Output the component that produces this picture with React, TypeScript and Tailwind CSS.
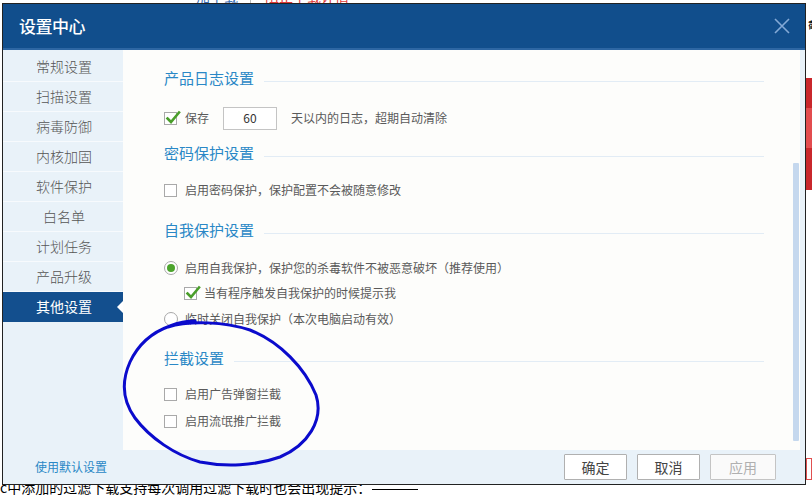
import React from "react";

const font = { fontFamily: '"Microsoft YaHei", "Noto Sans CJK SC", "Noto Sans", sans-serif' };

function Check({ checked }: { checked?: boolean }) {
  return (
    <span className="relative inline-block w-[13px] h-[13px] border border-[#a9a9a9] bg-white shrink-0">
      {checked && (
        <svg className="absolute left-[0px] top-[-3px]" width="16" height="16" viewBox="0 0 16 16">
          <path d="M2.5 8.5 L6 12 L14 2.5" fill="none" stroke="#4a9e2a" strokeWidth="2.6" strokeLinecap="square" />
        </svg>
      )}
    </span>
  );
}

function Radio({ checked }: { checked?: boolean }) {
  return (
    <span className="relative inline-flex items-center justify-center w-[14px] h-[14px] rounded-full border border-[#a9a9a9] bg-white shrink-0">
      {checked && <span className="w-[8px] h-[8px] rounded-full bg-[#4ca42c]" />}
    </span>
  );
}

function Heading({ text }: { text: string }) {
  return (
    <div className="flex items-center h-[24px]">
      <span className="text-[15px] text-[#2a88c6] leading-none">{text}</span>
      <span className="ml-[10px] flex-1 h-px bg-[#e2ecf5] mt-[8px] mr-[36px]" />
    </div>
  );
}

const items = ["常规设置", "扫描设置", "病毒防御", "内核加固", "软件保护", "白名单", "计划任务", "产品升级", "其他设置"];

export default function App() {
  return (
    <div className="relative w-[812px] h-[496px] overflow-hidden bg-white" style={font}>
      {/* page background behind dialog */}
      <div className="absolute left-[196px] top-[-11px] text-[14px] text-[#3b6fb6] leading-none">加下载</div>
      <div className="absolute left-[250px] top-[-9px] w-px h-[12px] bg-[#bbb]" />
      <div className="absolute left-[265px] top-[-11px] text-[14px] text-[#e03a3a] leading-none">阻止下载详情</div>
      <div className="absolute left-[808px] top-[20px] text-[10px] text-black leading-none">截</div>
      <div className="absolute left-[806px] top-[78px] w-[6px] h-[112px] bg-[#c9272c]">
        <div className="mt-[30px] h-[40px] bg-[#e24c4f]" />
      </div>
      <div className="absolute left-[806px] top-[458px] w-[6px] h-[22px] border border-[#e05050] bg-white" />
      <div className="absolute left-0 top-[480px] text-[14px] text-black leading-none whitespace-nowrap">c中添加的过滤下载支持每次调用过滤下载时也会出现提示：</div>
      <div className="absolute left-[372px] top-[489px] w-[46px] h-px bg-black" />

      {/* dialog */}
      <div className="absolute left-[2px] top-[3px] w-[804px] h-[482px] border border-[#222] bg-[#e9f2f9] flex flex-col">
        <div className="h-[44px] bg-[#114e8c] flex items-center justify-between pl-[16px] pr-[14px] shrink-0">
          <span className="text-white text-[17px] font-medium tracking-[-0.5px]">设置中心</span>
          <svg width="18" height="18" viewBox="0 0 18 18">
            <path d="M2 2 L16 16 M16 2 L2 16" stroke="#84a9d6" strokeWidth="1.6" />
          </svg>
        </div>
        <div className="h-[2px] bg-[#2d66a3] shrink-0" />
        <div className="flex h-[400px] shrink-0">
          <div className="w-[120px] flex flex-col pt-[2px]">
            {items.map((t, i) => {
              const sel = i === items.length - 1;
              return (
                <div
                  key={t}
                  className={
                    "relative h-[30px] flex items-center justify-center text-[14px] border-b " +
                    (sel ? "bg-[#134f8e] text-white border-[#134f8e]" : "text-[#555] font-light border-[#f7fafd]")
                  }
                >
                  <span className="ml-[2px]">{t}</span>
                  {sel && (
                    <span className="absolute right-0 top-[9px] w-0 h-0 border-y-[6px] border-y-transparent border-r-[6px] border-r-white" />
                  )}
                </div>
              );
            })}
          </div>
          <div className="relative w-[677px] bg-[#fdfdfb] pl-[41px] pt-[15px] text-[12px] text-[#5a5a5a]">
            <Heading text="产品日志设置" />
            <div className="flex items-center h-[24px] mt-[17px]">
              <Check checked />
              <span className="ml-[8px]">保存</span>
              <span className="ml-[14px] w-[54px] h-[23px] border border-[#c4c4c4] bg-white flex items-center justify-center text-[#333]">60</span>
              <span className="ml-[14px]">天以内的日志，超期自动清除</span>
            </div>
            <div className="mt-[10px]">
              <Heading text="密码保护设置" />
            </div>
            <div className="flex items-center h-[20px] mt-[16px]">
              <Check />
              <span className="ml-[8px]">启用密码保护，保护配置不会被随意修改</span>
            </div>
            <div className="mt-[17px]">
              <Heading text="自我保护设置" />
            </div>
            <div className="flex items-center h-[20px] mt-[17px]">
              <Radio checked />
              <span className="ml-[7px]">启用自我保护，保护您的杀毒软件不被恶意破坏（推荐使用）</span>
            </div>
            <div className="flex items-center h-[20px] mt-[5px] pl-[20px]">
              <Check checked />
              <span className="ml-[7px]">当有程序触发自我保护的时候提示我</span>
            </div>
            <div className="flex items-center h-[20px] mt-[6px]">
              <Radio />
              <span className="ml-[7px]">临时关闭自我保护（本次电脑启动有效）</span>
            </div>
            <div className="mt-[16px]">
              <Heading text="拦截设置" />
            </div>
            <div className="flex items-center h-[20px] mt-[15px]">
              <Check />
              <span className="ml-[8px]">启用广告弹窗拦截</span>
            </div>
            <div className="flex items-center h-[20px] mt-[7px]">
              <Check />
              <span className="ml-[8px]">启用流氓推广拦截</span>
            </div>
            <div className="absolute right-[1px] top-[113px] w-[6px] h-[278px] bg-[#c5d8ee] rounded-[1px]" />
          </div>
        </div>
        <div className="flex-1 flex items-center pl-[32px] pr-[29px]">
          <span className="text-[12px] text-[#2a88c6]">使用默认设置</span>
          <div className="ml-auto flex gap-[10px]">
            <button className="w-[63px] h-[26px] border border-[#b0b0b0] bg-white text-[14px] text-[#444] rounded-[1px]">确定</button>
            <button className="w-[63px] h-[26px] border border-[#b0b0b0] bg-white text-[14px] text-[#444] rounded-[1px]">取消</button>
            <button className="w-[66px] h-[26px] border border-[#c4c4c4] bg-[#fafafa] text-[14px] text-[#b0b0b0] rounded-[1px]">应用</button>
          </div>
        </div>
      </div>

      {/* hand-drawn ellipse annotation */}
      <svg className="absolute left-0 top-0 pointer-events-none" width="812" height="496" viewBox="0 0 812 496">
        <path
          d="M168 327 C190 320 225 322 250 330 C280 342 305 368 316 395 C324 420 308 445 280 457 C255 466 225 467 200 462 C175 455 150 438 135 418 C122 400 122 380 130 362 C138 345 150 333 170 326 C180 322 188 321 195 321"
          fill="none"
          stroke="#0b0bcc"
          strokeWidth="3"
          strokeLinecap="round"
        />
      </svg>
    </div>
  );
}
